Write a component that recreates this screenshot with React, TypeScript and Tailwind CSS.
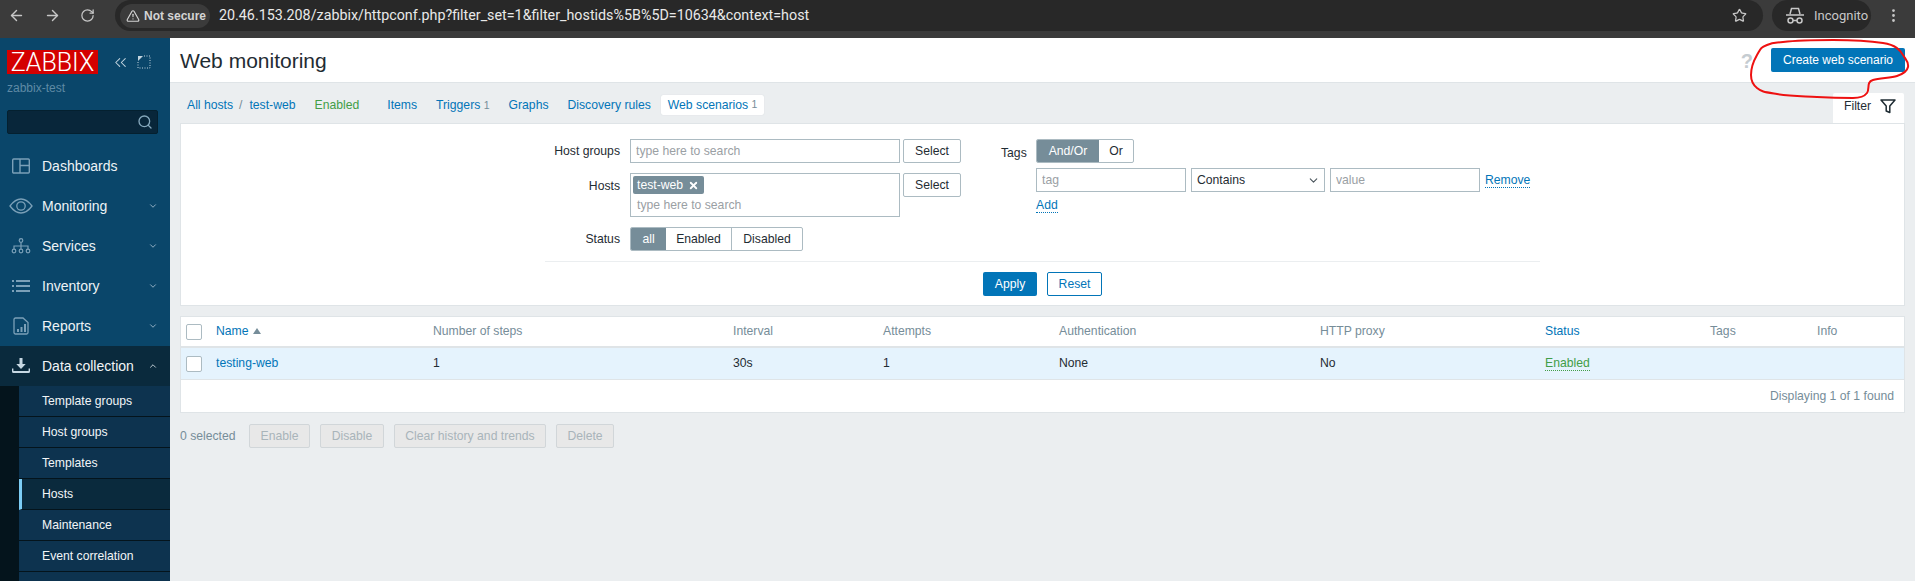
import React from 'react';
import { ArrowLeft, ArrowRight, RotateCw, TriangleAlert, Star, EllipsisVertical, Search, ChevronDown, ChevronUp, ChevronsLeft, X } from 'lucide-react';

const tableCols = 'grid grid-cols-[35px_217px_300px_150px_176px_261px_225px_165px_107px_1fr]';

const DashboardIcon = () => (
  <svg width="20" height="16" viewBox="0 0 20 16" fill="none" stroke="currentColor" strokeWidth="1.4">
    <rect x="1.7" y="1" width="16.6" height="14" rx="1" />
    <path d="M9 1v14M9 7.5h9.3" />
  </svg>
);

const EyeIcon = () => (
  <svg width="24" height="16" viewBox="0 0 24 16" fill="none" stroke="currentColor" strokeWidth="1.3">
    <path d="M1 8C5 2.6 8.500 1 12 1s7 1.600 11 7c-4 5.400-7.500 7-11 7S5 13.400 1 8z" />
    <circle cx="12" cy="8" r="4.200" />
  </svg>
);

const ServicesIcon = () => (
  <svg width="20" height="16" viewBox="0 0 20 16" fill="none" stroke="currentColor" strokeWidth="1.200">
    <circle cx="10" cy="2.500" r="1.800" />
    <circle cx="3" cy="13" r="1.800" />
    <circle cx="10" cy="13" r="1.800" />
    <circle cx="17" cy="13" r="1.800" />
    <path d="M10 4.500v6.500M3 11V8h14v3" />
  </svg>
);

const InventoryIcon = () => (
  <svg width="20" height="14" viewBox="0 0 20 14" fill="currentColor">
    <rect x="1" y="1" width="2" height="2" />
    <rect x="5" y="1" width="14" height="2" />
    <rect x="1" y="6" width="2" height="2" />
    <rect x="5" y="6" width="14" height="2" />
    <rect x="1" y="11" width="2" height="2" />
    <rect x="5" y="11" width="14" height="2" />
  </svg>
);

const ReportsIcon = () => (
  <svg width="16" height="18" viewBox="0 0 16 18" fill="none" stroke="currentColor" strokeWidth="1.300">
    <path d="M2.500 1h7.500l5 4.500V15.500a1.500 1.500 0 0 1-1.500 1.500h-11A1.500 1.500 0 0 1 1 15.500v-13A1.500 1.500 0 0 1 2.500 1z" />
    <path d="M4 12h2v3H4zM7.500 10h2v5h-2zM11 7h2v8h-2z" fill="currentColor" stroke="none" />
  </svg>
);

const DataIcon = () => (
  <svg width="20" height="16" viewBox="0 0 20 16" fill="currentColor">
    <path d="M8.500 0h3v6h3.200L10 11 5.300 6h3.200z" />
    <path d="M1 10.500v3a1.500 1.500 0 0 0 1.500 1.500h15a1.500 1.500 0 0 0 1.500-1.500v-3h-1.400v2.600H2.400v-2.600z" />
  </svg>
);

const IncognitoIcon = () => (
  <svg width="20" height="18" viewBox="0 0 20 18" fill="none" stroke="currentColor" strokeWidth="1.500">
    <path d="M5 7l1.500-5.500h7L15 7M1 8h18" />
    <circle cx="5.500" cy="13.500" r="2.500" />
    <circle cx="14.500" cy="13.500" r="2.500" />
    <path d="M8 13.500h4" />
  </svg>
);

const FunnelIcon = () => (
  <svg width="16" height="15" viewBox="0 0 16 15" fill="none" stroke="#1f2c33" strokeWidth="1.500" strokeLinejoin="round">
    <path d="M1 1h14L9.800 7v6.500L6.200 12V7z" />
  </svg>
);

const menu = [
  { label: 'Dashboards', icon: DashboardIcon },
  { label: 'Monitoring', icon: EyeIcon, chevron: true },
  { label: 'Services', icon: ServicesIcon, chevron: true },
  { label: 'Inventory', icon: InventoryIcon, chevron: true },
  { label: 'Reports', icon: ReportsIcon, chevron: true },
];

const subMenu = ['Template groups', 'Host groups', 'Templates', 'Hosts', 'Maintenance', 'Event correlation'];

const Checkbox = () => <div className="h-4 w-4 rounded-[2px] border border-[#acbbc2] bg-white" />;

const App: React.FC = () => {
  return (
    <div className="relative flex h-[581px] w-[1915px] flex-col overflow-hidden bg-[#ebeef0] font-['Liberation_Sans',Arial,sans-serif] text-[12.2px] text-[#1f2c33]">
      {/* Browser bar */}
      <div className="flex h-[38px] shrink-0 items-start bg-[#3b3b3b] text-[#c7c7c7]">
        <div className="flex h-[31px] items-center gap-[19px] pl-[8px] pr-[11px]">
          <ArrowLeft className="h-[17px] w-[17px]" />
          <ArrowRight className="h-[17px] w-[17px]" />
          <RotateCw className="h-[15px] w-[15px]" />
        </div>
        <div className="ml-[9px] flex h-[31px] w-[1648px] items-center rounded-full bg-[#282828] pl-[5px] pr-[16px]">
          <div className="flex h-[24px] w-[90px] items-center gap-[4px] rounded-full bg-[#3b3b3b] pl-[6px] font-bold text-[#d4d4d4]">
            <TriangleAlert className="h-[14px] w-[14px] shrink-0" />
            <span className="whitespace-nowrap text-[12px]">Not secure</span>
          </div>
          <span className="ml-[9px] font-['Roboto',sans-serif] text-[14.3px] text-[#e8e8e8]">
            20.46.153.208/zabbix/httpconf.php?filter_set=1&filter_hostids%5B%5D=10634&context=host
          </span>
          <Star className="ml-auto h-[15px] w-[15px]" />
        </div>
        <div className="ml-[9px] flex h-[31px] w-[99px] items-center gap-[9px] rounded-full bg-[#282828] pl-[13px] font-['Roboto',sans-serif] text-[13px]">
          <IncognitoIcon />
          <span>Incognito</span>
        </div>
        <div className="flex h-[31px] w-[44px] items-center justify-center">
          <EllipsisVertical className="h-[17px] w-[17px]" />
        </div>
      </div>

      <div className="flex min-h-0 flex-1">
        {/* Sidebar */}
        <div className="w-[170px] shrink-0 bg-[#0a466a]">
          <div className="flex items-center px-[7px] pt-[12px]">
            <div className="flex h-[24px] w-[91px] items-center justify-center bg-[#d40000] font-['Roboto',sans-serif] text-[25px] font-light leading-none text-white">
              ZABBIX
            </div>
            <ChevronsLeft className="ml-[13px] h-[19px] w-[19px] text-[#c3d4df]" strokeWidth={1.300} />
            <svg width="14" height="14" viewBox="0 0 14 14" className="ml-[7px] text-[#c3d4df]" fill="none">
              <path d="M1 1h5L1 6z" fill="currentColor" />
              <path d="M7 1h6v12H1V7" stroke="currentColor" strokeDasharray="1 1.5" />
            </svg>
          </div>
          <div className="mt-[7px] px-[7px] text-[12px] leading-[15px] text-[#5f8aa5]">zabbix-test</div>
          <div className="mx-[7px] mt-[14px] flex h-[24px] w-[151px] items-center justify-end rounded-[2px] border border-[#04202f] bg-[#08263a] pr-[4px]">
            <Search className="h-[16px] w-[16px] text-[#86a9bd]" strokeWidth={2} />
          </div>
          <nav className="mt-[12px]">
            {menu.map((item) => (
              <div key={item.label} className="flex h-[40px] items-center text-[14px] text-[#eef3f6]">
                <div className="flex w-[42px] justify-center text-[#7ba0b8]">
                  <item.icon />
                </div>
                <span>{item.label}</span>
                {item.chevron && <ChevronDown className="ml-auto mr-[12px] h-[10px] w-[10px] text-[#a9c2d2]" strokeWidth={2} />}
              </div>
            ))}
            <div className="flex h-[40px] items-center bg-[#0a2a3d] text-[14px] text-[#f2f5f7]">
              <div className="flex w-[42px] justify-center text-[#c7d8e3]">
                <DataIcon />
              </div>
              <span>Data collection</span>
              <ChevronUp className="ml-auto mr-[12px] h-[10px] w-[10px] text-[#dce6ec]" strokeWidth={2} />
            </div>
            <div className="bg-[#04141c] pl-[19px]">
              {subMenu.map((name) => (
                <div
                  key={name}
                  className={
                    name === 'Hosts'
                      ? 'flex h-[31px] items-center border-b border-[#04141c] border-l-[3px] border-l-[#7ccdf5] bg-[#0a2a3d] pl-[20px] text-[#f2f5f7]'
                      : 'flex h-[31px] items-center border-b border-[#04141c] bg-[#0d334f] pl-[23px] text-[#f2f5f7]'
                  }
                >
                  {name}
                </div>
              ))}
              <div className="h-[31px] bg-[#0d334f]" />
            </div>
          </nav>
        </div>

        {/* Main content */}
        <div className="min-w-0 flex-1">
          <div className="flex h-[45px] items-center border-b border-[#dfe4e7] bg-white pl-[10px] pr-[10px]">
            <h1 className="pt-[1px] text-[21px] font-normal">Web monitoring</h1>
            <span className="ml-auto pt-[2px] text-[20px] font-bold text-[#c5ccd1]">?</span>
            <button className="ml-[18px] h-[24px] w-[134px] rounded-[2px] bg-[#0275b8] text-[12px] text-white">Create web scenario</button>
          </div>

          <div className="px-[10px]">
            <div className="flex h-[40px] items-end">
              <div className="flex h-[40px] items-center pl-[7px] pt-[4px] text-[#0275b8]">
                <span>All hosts</span>
                <span className="ml-[6px] text-[#768d99]">/</span>
                <span className="ml-[7px]">test-web</span>
                <span className="ml-[19px] text-[#429e47]">Enabled</span>
                <span className="ml-[28px]">Items</span>
                <span className="ml-[19px]">Triggers <span className="text-[10.500px] text-[#768d99]">1</span></span>
                <span className="ml-[19px]">Graphs</span>
                <span className="ml-[19px]">Discovery rules</span>
                <span className="ml-[10px] flex h-[20px] items-center rounded-[2px] bg-white px-[7px] shadow-[0_0_1px_#c5ccd1]">
                  Web scenarios&nbsp;<span className="text-[10.500px] text-[#768d99]">1</span>
                </span>
              </div>
              <div className="ml-auto mr-[1px] flex h-[30px] w-[71px] items-center gap-[9px] rounded-t-[2px] bg-white pb-[4px] pl-[11px]">
                <span>Filter</span>
                <FunnelIcon />
              </div>
            </div>

            {/* Filter */}
            <div className="h-[183px] border border-[#dfe4e7] bg-white px-[364px] pt-[15px]">
              <div className="flex h-[112px]">
                <div className="flex w-[456px] flex-col gap-[10px]">
                  <div className="flex items-center">
                    <span className="w-[75px] text-right">Host groups</span>
                    <input placeholder="type here to search" className="ml-[10px] h-[24px] w-[270px] border border-[#acbbc2] px-[5px] placeholder:text-[#9aa0a4]" />
                    <button className="ml-[3px] h-[24px] w-[58px] rounded-[2px] border border-[#acbbc2]">Select</button>
                  </div>
                  <div className="flex items-start">
                    <span className="w-[75px] pt-[4px] text-right">Hosts</span>
                    <div className="ml-[10px] h-[44px] w-[270px] border border-[#acbbc2] pl-[2px] pt-[2px]">
                      <div className="flex h-[18px] w-[71px] items-center gap-[5px] rounded-[2px] bg-[#768d99] pl-[4px] text-white">
                        <span>test-web</span>
                        <X className="h-[11px] w-[11px]" strokeWidth={4} />
                      </div>
                      <div className="mt-[3px] pl-[4px] leading-[16px] text-[#9aa0a4]">type here to search</div>
                    </div>
                    <button className="ml-[3px] h-[24px] w-[58px] rounded-[2px] border border-[#acbbc2]">Select</button>
                  </div>
                  <div className="flex items-center">
                    <span className="w-[75px] text-right">Status</span>
                    <div className="ml-[10px] flex h-[24px] overflow-hidden rounded-[2px] border border-[#acbbc2]">
                      <span className="flex w-[35px] items-center justify-center bg-[#768d99] text-white">all</span>
                      <span className="flex w-[66px] items-center justify-center border-r border-[#acbbc2]">Enabled</span>
                      <span className="flex w-[70px] items-center justify-center">Disabled</span>
                    </div>
                  </div>
                </div>
                <div className="flex items-start">
                  <span className="w-[24px] pt-[5px]">Tags</span>
                  <div className="ml-[11px]">
                    <div className="flex h-[24px] w-[98px] overflow-hidden rounded-[2px] border border-[#acbbc2]">
                      <span className="flex w-[62px] items-center justify-center bg-[#768d99] text-white">And/Or</span>
                      <span className="flex flex-1 items-center justify-center">Or</span>
                    </div>
                    <div className="mt-[5px] flex items-center">
                      <input placeholder="tag" className="h-[24px] w-[150px] border border-[#acbbc2] px-[5px] placeholder:text-[#9aa0a4]" />
                      <div className="ml-[5px] flex h-[24px] w-[134px] items-center justify-between border border-[#acbbc2] pl-[5px] pr-[4px]">
                        <span>Contains</span>
                        <ChevronDown className="h-[13px] w-[13px] text-[#4a555c]" />
                      </div>
                      <input placeholder="value" className="ml-[5px] h-[24px] w-[150px] border border-[#acbbc2] px-[5px] placeholder:text-[#9aa0a4]" />
                      <span className="ml-[5px] border-b border-dotted border-[#0275b8] leading-[14px] text-[#0275b8]">Remove</span>
                    </div>
                    <div className="mt-[6px] inline-block border-b border-dotted border-[#0275b8] leading-[14px] text-[#0275b8]">Add</div>
                  </div>
                </div>
              </div>
              <div className="mt-[10px] border-t border-[#ebeef0]" />
              <div className="mt-[10px] flex justify-center gap-[10px]">
                <button className="h-[24px] w-[54px] rounded-[2px] bg-[#0275b8] text-white">Apply</button>
                <button className="h-[24px] w-[55px] rounded-[2px] border border-[#0275b8] text-[#0275b8]">Reset</button>
              </div>
            </div>

            {/* Table */}
            <div className="mt-[10px] border border-[#dfe4e7] bg-white">
              <div className={`${tableCols} h-[31px] items-center border-b-2 border-[#dfe4e7] text-[#768d99]`}>
                <div className="pl-[5px]"><Checkbox /></div>
                <div className="flex items-center gap-[4px] text-[#0275b8]">
                  Name
                  <span className="h-0 w-0 border-x-[4px] border-b-[6px] border-x-transparent border-b-[#768d99]" />
                </div>
                <div>Number of steps</div>
                <div>Interval</div>
                <div>Attempts</div>
                <div>Authentication</div>
                <div>HTTP proxy</div>
                <div className="text-[#0275b8]">Status</div>
                <div>Tags</div>
                <div>Info</div>
              </div>
              <div className={`${tableCols} h-[32px] items-center border-b border-[#dfe4e7] bg-[#e5f3fd]`}>
                <div className="pl-[5px]"><Checkbox /></div>
                <div className="text-[#0275b8]">testing-web</div>
                <div>1</div>
                <div>30s</div>
                <div>1</div>
                <div>None</div>
                <div>No</div>
                <div><span className="border-b border-dotted border-[#429e47] text-[#429e47]">Enabled</span></div>
                <div />
                <div />
              </div>
              <div className="flex h-[32px] items-center justify-end pr-[10px] text-[#768d99]">Displaying 1 of 1 found</div>
            </div>

            {/* Mass actions */}
            <div className="mt-[11px] flex items-center text-[#768d99]">
              <span className="w-[69px]">0 selected</span>
              <div className="flex gap-[10px] text-[#a9b4ba]">
                <span className="flex h-[24px] w-[61px] items-center justify-center rounded-[2px] border border-[#d1d6d9] bg-[#e8e8e8]">Enable</span>
                <span className="flex h-[24px] w-[64px] items-center justify-center rounded-[2px] border border-[#d1d6d9] bg-[#e8e8e8]">Disable</span>
                <span className="flex h-[24px] w-[152px] items-center justify-center rounded-[2px] border border-[#d1d6d9] bg-[#e8e8e8]">Clear history and trends</span>
                <span className="flex h-[24px] w-[58px] items-center justify-center rounded-[2px] border border-[#d1d6d9] bg-[#e8e8e8]">Delete</span>
              </div>
            </div>
          </div>
        </div>
      </div>

      {/* Hand-drawn highlight over the button */}
      <svg className="pointer-events-none absolute left-0 top-0 h-[120px] w-[1915px]" viewBox="0 0 1915 120" fill="none">
        <path
          d="M1783 42C1800 40 1815 40 1833 40S1870 41 1883 43S1900 50 1903 55S1909 62 1908 67S1903 74 1897 76S1880 78 1873 80S1870 89 1867 93S1860 98 1853 98S1835 98 1817 97S1790 96 1777 94S1762 92 1757 88S1751 80 1751 75S1753 62 1757 55S1760 48 1767 45S1775 43 1783 42Z"
          stroke="#ee1111"
          strokeWidth="2"
        />
      </svg>
    </div>
  );
};

export default App;
